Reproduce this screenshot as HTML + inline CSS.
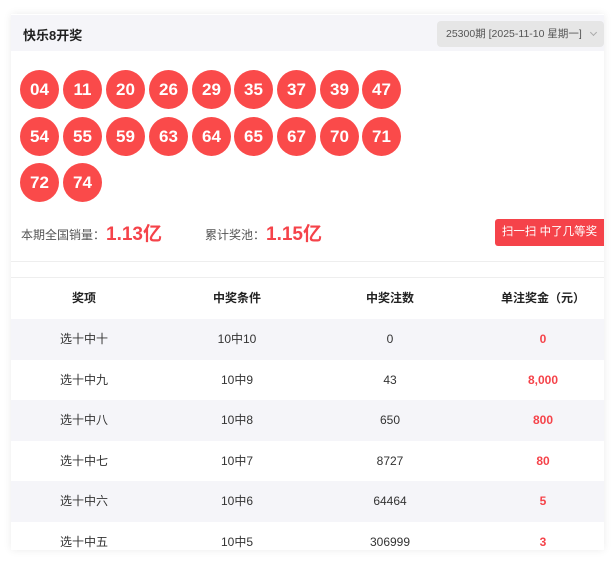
<!DOCTYPE html>
<html><head><meta charset="utf-8"><style>
*{margin:0;padding:0;box-sizing:border-box}
body{width:615px;height:562px;background:#fff;font-family:"Liberation Sans","Noto Sans CJK SC",sans-serif;position:relative;overflow:hidden}
.card{position:absolute;left:11px;top:14px;width:593px;height:536px;background:#fff;box-shadow:0 0 8px rgba(0,0,0,.08);overflow:hidden}
.hd{position:absolute;left:0;top:1px;width:593px;height:36px;background:#f5f5f9}
.hd .t{position:absolute;left:12px;top:10px;font-size:13px;font-weight:bold;color:#222}
.sel{position:absolute;left:426px;top:6px;width:167px;height:26px;background:#e6e6e6;border-radius:4px;font-size:10.5px;color:#555;line-height:26px;padding-left:9px}
.sel:after{content:"";position:absolute;right:8px;top:9px;width:4px;height:4px;border-right:1px solid #aaa;border-bottom:1px solid #aaa;transform:rotate(45deg)}
.b{position:absolute;width:39px;height:39px;border-radius:50%;background:#fa4a4a;color:#fff;font-weight:bold;font-size:17px;text-align:center;line-height:39px}
.st{position:absolute;top:205px;font-size:12px;color:#555}
.st b{color:#f5434a;font-size:19px;margin-left:1px;vertical-align:-1px}
.btn{position:absolute;left:484px;top:205px;width:109px;height:27px;background:#f5434a;color:#fff;font-size:11.5px;line-height:27px;text-align:center;border-radius:3px 0 0 3px}
.ln{position:absolute;left:0;width:593px;height:1px;background:#eee}
.row{position:absolute;left:0;width:593px;height:40.5px;font-size:12px;color:#333}
.row span{position:absolute;top:0;line-height:40.5px;width:140px;margin-left:-70px;text-align:center}
.g{background:#f5f5f9}
.th{font-weight:bold;color:#222}
.r{color:#f5434a;font-weight:bold}
</style></head><body>
<div class="card">
<div class="hd"><div class="t">快乐8开奖</div><div class="sel">25300期 [2025-11-10 星期一]</div></div>
<div class="b" style="left:9px;top:56px">04</div><div class="b" style="left:52px;top:56px">11</div><div class="b" style="left:95px;top:56px">20</div><div class="b" style="left:138px;top:56px">26</div><div class="b" style="left:181px;top:56px">29</div><div class="b" style="left:223px;top:56px">35</div><div class="b" style="left:266px;top:56px">37</div><div class="b" style="left:309px;top:56px">39</div><div class="b" style="left:351px;top:56px">47</div>
<div class="b" style="left:9px;top:103px">54</div><div class="b" style="left:52px;top:103px">55</div><div class="b" style="left:95px;top:103px">59</div><div class="b" style="left:138px;top:103px">63</div><div class="b" style="left:181px;top:103px">64</div><div class="b" style="left:223px;top:103px">65</div><div class="b" style="left:266px;top:103px">67</div><div class="b" style="left:309px;top:103px">70</div><div class="b" style="left:351px;top:103px">71</div>
<div class="b" style="left:9px;top:149px">72</div><div class="b" style="left:52px;top:149px">74</div>
<div class="st" style="left:10px">本期全国销量：<b>1.13亿</b></div>
<div class="st" style="left:194px">累计奖池：<b>1.15亿</b></div>
<div class="btn">扫一扫 中了几等奖</div>
<div class="ln" style="top:247px"></div>
<div class="ln" style="top:263px"></div>
<div class="row th" style="top:264px;height:41px"><span style="left:73px;line-height:41px">奖项</span><span style="left:226px;line-height:41px">中奖条件</span><span style="left:379px;line-height:41px">中奖注数</span><span style="left:532px;line-height:41px">单注奖金（元）</span></div>
<div class="row g" style="top:305px"><span style="left:73px">选十中十</span><span style="left:226px">10中10</span><span style="left:379px">0</span><span class="r" style="left:532px">0</span></div>
<div class="row" style="top:345.5px"><span style="left:73px">选十中九</span><span style="left:226px">10中9</span><span style="left:379px">43</span><span class="r" style="left:532px">8,000</span></div>
<div class="row g" style="top:386px"><span style="left:73px">选十中八</span><span style="left:226px">10中8</span><span style="left:379px">650</span><span class="r" style="left:532px">800</span></div>
<div class="row" style="top:426.5px"><span style="left:73px">选十中七</span><span style="left:226px">10中7</span><span style="left:379px">8727</span><span class="r" style="left:532px">80</span></div>
<div class="row g" style="top:467px"><span style="left:73px">选十中六</span><span style="left:226px">10中6</span><span style="left:379px">64464</span><span class="r" style="left:532px">5</span></div>
<div class="row" style="top:507.5px"><span style="left:73px">选十中五</span><span style="left:226px">10中5</span><span style="left:379px">306999</span><span class="r" style="left:532px">3</span></div>
</div>
</body></html>
